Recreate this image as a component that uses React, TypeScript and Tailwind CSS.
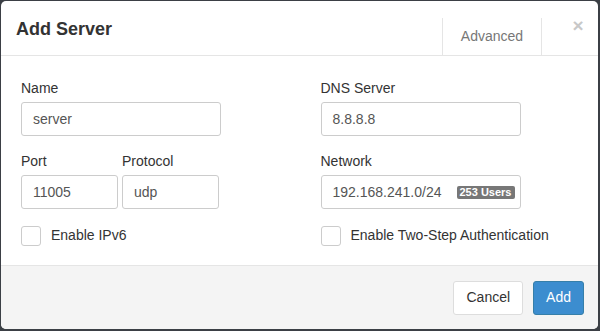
import React from 'react';

const Field = ({ label, value, width = 'w-[200px]', children }: { label: string; value: string; width?: string; children?: React.ReactNode }) => (
  <div className="flex flex-col">
    <label className="text-[14px] leading-[20px] text-[#333] mb-[4px]">{label}</label>
    <div className={`${width} h-[34px] border border-[#ccc] rounded-[3px] flex items-center px-[11px] text-[14px] text-[#555] bg-white`}>
      <span className="flex-1">{value}</span>
      {children}
    </div>
  </div>
);

const Check = ({ label }: { label: string }) => (
  <div className="flex items-center gap-[10px] mt-[16px]">
    <div className="w-[20px] h-[20px] border border-[#ccc] rounded-[3px] bg-white" />
    <span className="text-[14px] text-[#333]">{label}</span>
  </div>
);

export default function App() {
  return (
    <div className="w-[600px] h-[331px] bg-[#3b3f45] pt-[1px] pl-[1px] pr-[2px] pb-[2px]" style={{ fontFamily: '"Liberation Sans", Arial, sans-serif' }}>
      <div className="w-full h-full bg-white rounded-[5px] overflow-hidden flex flex-col">
        {/* Header */}
        <div className="h-[55px] border-b border-[#e5e5e5] flex items-start">
          <h4 className="pl-[15px] pt-[16px] text-[18px] font-bold text-[#333] leading-[24px] flex-1">Add Server</h4>
          <div className="mt-[17px] h-[37px] w-[100px] border-l border-r border-[#e5e5e5] flex items-center justify-center text-[14px] text-[#777]">
            Advanced
          </div>
          <div className="w-[56px] flex justify-center pt-[15px] pl-[16px] text-[19px] font-bold text-[#c8c8c8] leading-[20px]">×</div>
        </div>
        {/* Body */}
        <div className="flex-1 grid grid-cols-2 pt-[22px]">
          <div className="pl-[20px]">
            <Field label="Name" value="server" />
            <div className="flex gap-[4px] mt-[15px]">
              <Field label="Port" value="11005" width="w-[97px]" />
              <Field label="Protocol" value="udp" width="w-[97px]" />
            </div>
            <Check label="Enable IPv6" />
          </div>
          <div className="pl-[21px]">
            <Field label="DNS Server" value="8.8.8.8" />
            <div className="mt-[15px]">
              <Field label="Network" value="192.168.241.0/24">
                <span className="bg-[#777] text-white text-[11px] font-bold leading-[13px] px-[3px] rounded-[2px] -mr-[6px]">253 Users</span>
              </Field>
            </div>
            <Check label="Enable Two-Step Authentication" />
          </div>
        </div>
        {/* Footer */}
        <div className="h-[64px] border-t border-[#e5e5e5] bg-[#f4f4f4] flex items-center justify-end gap-[10px] pr-[14px]">
          <button className="h-[34px] px-[12px] border border-[#ddd] rounded-[3px] bg-white text-[14px] text-[#333]">Cancel</button>
          <button className="h-[34px] px-[12px] border border-[#367fa9] rounded-[3px] bg-[#3c8dcf] text-[14px] text-white">Add</button>
        </div>
      </div>
    </div>
  );
}
